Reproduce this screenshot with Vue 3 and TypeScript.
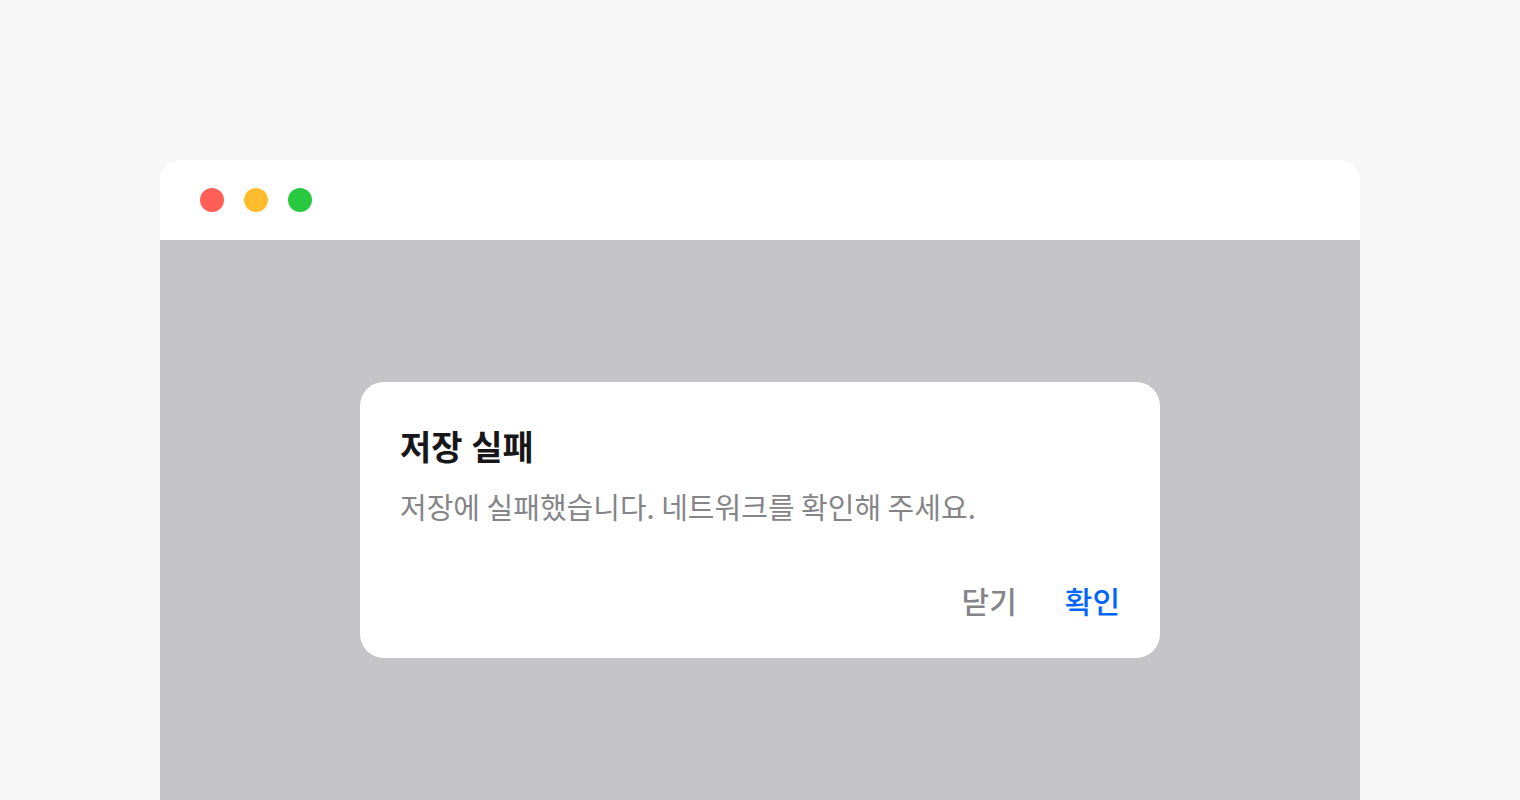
<script setup lang="ts">
import { ref } from 'vue'

interface WindowControl {
  name: string
  label: string
}

const controls: WindowControl[] = [
  { name: 'close', label: '창 닫기' },
  { name: 'minimize', label: '최소화' },
  { name: 'zoom', label: '최대화' },
]

const open = ref(true)

function dismiss(): void {
  open.value = false
}
</script>

<template>
  <main class="stage">
    <section class="window">
      <header class="titlebar">
        <button
          v-for="control in controls"
          :key="control.name"
          type="button"
          class="control"
          :class="control.name"
          :aria-label="control.label"
        ></button>
      </header>
      <div class="backdrop">
        <div
          v-if="open"
          class="dialog"
          role="alertdialog"
          aria-labelledby="dialog-title"
          aria-describedby="dialog-message"
        >
          <h1 id="dialog-title" class="title">저장 실패</h1>
          <p id="dialog-message" class="message">저장에 실패했습니다. 네트워크를 확인해 주세요.</p>
          <div class="actions">
            <button type="button" class="action" @click="dismiss">닫기</button>
            <button type="button" class="action primary" @click="dismiss">확인</button>
          </div>
        </div>
      </div>
    </section>
  </main>
</template>

<style>
body {
  background: #f7f7f7;
}
</style>

<style scoped>
.stage {
  box-sizing: border-box;
  display: flex;
  flex-direction: column;
  min-height: 100vh;
  padding: 160px 160px 0;
  background: #f7f7f7;
  font-family: "Noto Sans CJK KR", sans-serif;
}

.window {
  flex: 1;
  display: flex;
  flex-direction: column;
  overflow: hidden;
  border-radius: 20px 20px 0 0;
  background: #fff;
}

.titlebar {
  display: flex;
  gap: 20px;
  padding: 28px 40px;
}

.control {
  width: 24px;
  height: 24px;
  padding: 0;
  border: 0;
  border-radius: 50%;
}

.close {
  background: #ff5f57;
}

.minimize {
  background: #ffbd2e;
}

.zoom {
  background: #28c840;
}

.backdrop {
  flex: 1;
  display: flex;
  justify-content: center;
  align-items: center;
  padding: 40px;
  background: #c5c5c7;
}

.dialog {
  box-sizing: border-box;
  width: 100%;
  max-width: 800px;
  padding: 40px 40px 34px;
  border-radius: 24px;
  background: #fff;
}

.title {
  margin: 0 0 12px;
  font-family: Inter, "Noto Sans CJK KR", sans-serif;
  font-size: 34px;
  font-weight: 600;
  line-height: 52px;
  color: #171719;
}

.message {
  margin: 0 0 50px;
  font-size: 29px;
  font-weight: 400;
  line-height: 40px;
  color: #858588;
}

.actions {
  display: flex;
  justify-content: flex-end;
  gap: 48px;
}

.action {
  padding: 0;
  border: 0;
  background: none;
  font-family: inherit;
  font-size: 30px;
  font-weight: 500;
  line-height: 48px;
  color: #858588;
  cursor: pointer;
}

.primary {
  color: #0066ff;
}
</style>
